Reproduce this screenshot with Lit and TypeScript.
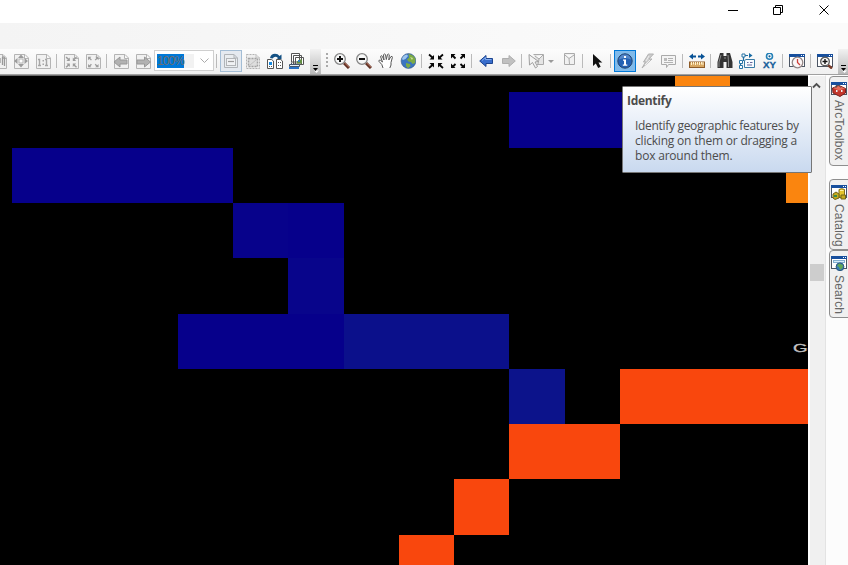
import { LitElement, html, svg, css, nothing } from "lit";
import { customElement, property } from "lit/decorators.js";

const G = "#b4b4b4";
const page = svg`<path d="M1.5 1.5H12L15.5 5V15.5H1.5Z M11.5 1.5V5.5H15.5" fill="#f1f1f1" stroke=${G}/>`;
const window_ = svg`<rect x="0.5" y="1.5" width="15" height="12" fill="#fff" stroke="#4c5664"/><path d="M0 1H16V4H0Z" fill="#174f9d"/><path d="M12 2h1v1h-1zM14 2h1v1h-1z" fill="#fff"/>`;
const lens = (sign: unknown) => svg`<path d="M10 10L15 15" stroke="#5f2f22" stroke-width="3"/><path d="M10.5 9.8L15 14.2" stroke="#b77561"/><circle cx="6" cy="6" r="5.3" fill="#f7f8f8" stroke="#858585" stroke-width="1.3"/>${sign}`;
const inward = (c: string) => svg`<path d="M1 1.500L5 5M15 1.500L11 5M1 15L5 11.500M15 15L11 11.500" stroke=${c} stroke-width="1.800"/><path d="M6 2V6.500H1.500ZM10 2V6.500H14.500ZM6 14.500V10H1.500ZM10 14.500V10H14.500Z" fill=${c}/>`;
const outward = (c: string) => svg`<path d="M2 2L5.500 5.500M14 2L10.500 5.500M2 14.500L5.500 11M14 14.500L10.500 11" stroke=${c} stroke-width="1.800"/><path d="M1 1H5.500L1 5.500ZM15 1H10.500L15 5.500ZM1 15H5.500L1 10.500ZM15 15H10.500L15 10.500Z" fill=${c}/>`;

const icons: Record<string, unknown> = {
  pan: svg`${page}<path d="M9 10V5M11.5 12V4.500Q13 3 13.500 5V13" fill="none" stroke="#999" stroke-width="1.3"/>`,
  fullPage: svg`${page}<path d="M8 1.5L5 5H11ZM8 14.500L5 11H11ZM1 8L4.500 5V11ZM15 8L11.500 5V11Z" fill="#9c9c9c"/><rect x="6" y="6" width="4" height="4" fill="#fff" stroke=${G}/>`,
  oneToOne: svg`${page}<path d="M3 6.500H4.500V12M3 12.500H6M10 6.500H11.500V12M10 12.500H13" fill="none" stroke="#a6a6a6" stroke-width="1.4"/><path d="M7.500 7h1.500v1.500H7.500zM7.500 10.500h1.500V12H7.500z" fill="#a6a6a6"/>`,
  pageIn: svg`${page}<g transform="translate(2.3 3) scale(.75)">${inward("#9c9c9c")}</g>`,
  pageOut: svg`${page}<g transform="translate(2.3 3) scale(.75)">${outward("#9c9c9c")}</g>`,
  pageBack: svg`${page}<path d="M1 9L7 4V7H14V11H7V14Z" fill="#b2b2b2" stroke="#989898"/>`,
  pageNext: svg`${page}<path d="M15.500 9L9.500 4V7H2V11H9.500V14Z" fill="#b2b2b2" stroke="#989898"/>`,
  draft: svg`<path d="M1.500 1.500H11L14.500 5V14.500H1.500ZM11 1.500V5H14.500" fill="#e9edf0" stroke="#b0b4b8"/><rect x="3.500" y="5.500" width="9" height="7" fill="#f0f2f4" stroke="#b2b5b8"/><path d="M5 8.500H11" stroke="#9b9b9b" stroke-width="1.200"/>`,
  focus: svg`<path d="M1.500 1.500H11L14.500 5V15.500H1.500Z" fill="#eee" stroke="#b2b2b2" stroke-dasharray="2 1"/><path d="M3.500 5.500H12.500V13.500H3.500Z" fill="#dedede" stroke="#a2a2a2" stroke-width="1.500" stroke-dasharray="2 1"/><path d="M5 12L11 7M11 1.500V5H15" stroke="#c0c0c0" fill="none"/>`,
  change: svg`<path d="M3 5Q4 .8 8 .8Q11 .8 12.500 3L14.500 1.500V6.500H9.500L11 5Q8 2.500 5.500 5.500Z" fill="#145184"/><path d="M.5 6.500H4.500L6.500 8V15.500H.5ZM9.500 6.500H13.500L15.500 8V15.500H9.500Z" fill="#fff" stroke="#555"/><path d="M2 9H5V12H2Z" fill="#168ae0"/><path d="M11 9.500h3M11 12.500h3M2 13.500h3" stroke="#555" stroke-dasharray="1 1"/>`,
  pages: svg`<path d="M2.500 9V.5H10.500V9ZM4.500 11V2.500H12.500V11ZM6.500 11.500V4.500H14.500V11.500Z" fill="#fff" stroke="#555"/><path d="M8 10.500V8H10V6.500H13V10.500Z" fill="#639043"/><path d="M9 7h2v2H9z" fill="#3280bf"/><path d="M0.500 11.500H10.500V13.500H.5ZM2.500 9.500V11" fill="#e7f0f8" stroke="#45566b"/><path d="M0 15H10" stroke="#2b74c8" stroke-width="2"/>`,
  zoomIn: lens(svg`<path d="M3 6H9M6 3V9" stroke="#111" stroke-width="2"/>`),
  zoomOut: lens(svg`<path d="M3 6H9" stroke="#111" stroke-width="2"/>`),
  hand: svg`<path d="M5 15L3.800 11.500L.8 8.200Q.8 6.500 2.500 7.300L4.500 9L2.500 3.500Q3 2 4.200 3.200L6 7L5.500 1.700Q6.500 .3 7.500 1.600L8.300 6.500L9.500 1.500Q10.500 .5 11.300 1.800L10.800 7L13 3.500Q14.500 3 14.400 4.400L13 9.500V12L11.800 15" fill="#fff" stroke="#555"/>`,
  globe: svg`<circle cx="8.500" cy="8" r="7.400" fill="#3a74c0" stroke="#36567d" stroke-width=".6"/><path d="M2 6Q3 2 7 1.500L8 3L5.500 6L3 7Z" fill="#9cc5ee"/><path d="M8.500 1Q13.500 1.500 15.500 6L15 10L12.500 11L11 9L8.500 8.500L7 6.500L9 4.500ZM6 10L10 11L10.500 13L8 15.200L6 13Z" fill="#7cab44"/><path d="M10 4L13 5L12 7Z" fill="#cde09a"/>`,
  in: inward("#080808"),
  out: outward("#080808"),
  back: svg`<path d="M1.700 8L8 2.500V5.500H14.500V10.500H8V13.500Z" fill="#386dcc" stroke="#1b438f"/><path d="M4 7.500L7.500 4.500V6.500H13.500" stroke="#83aced" fill="none"/>`,
  next: svg`<path d="M15.300 8L9 2.500V5.500H2.500V10.500H9V13.500Z" fill="#c0c0c0" stroke="#aeaeae"/>`,
  select: svg`<path d="M5.500 1.500H15.500V11.500H9M7 3L11 6L15 2M11 6L10 11" fill="#e5e5e5" stroke="#aaa"/><path d="M1 1.500L1.500 12L4.500 9.500L7.500 15L9.500 13.500L7 9L10.500 8.500Z" fill="#f3f3f3" stroke="#9e9e9e"/>`,
  clear: svg`<path d="M3.500 .5H13.500V11.500H3.500ZM4 2L8 5.500L13 2M8 5.500L8.500 11" fill="#f1f1f1" stroke="#aaa"/>`,
  cursor: svg`<path d="M4 1V13L6.800 10.500L9.200 15L11.700 13.800L9.500 9.500H13.300Z" fill="#111"/>`,
  identify: svg`<circle cx="8" cy="8" r="7.200" fill="#2462b4" stroke="#24456e"/><path d="M2 6.500Q3 1.500 8 1.500T14 6.500Q8 3.500 2 6.500" fill="#5487c8"/><path d="M7 3H9V5H7ZM6 6.500H9V11.500H10.300V12.700H5.800V11.500H7V7.700H6Z" fill="#fff"/>`,
  flash: svg`<path d="M9.500 1H14.500L10 6H13L3 15L6.500 9H4.500Z" fill="#ccc" stroke="#b2b2b2"/><path d="M10 3L7 8M11 7L6 12" stroke="#eee"/>`,
  popup: svg`<path d="M.5 2.500H14.500V11.500H7.500L5.500 14.500V11.500H.5Z" fill="#f4f4f4" stroke="#aaa"/><path d="M3 5H6V8H3Z" fill="#bbb"/><path d="M7 5.500H12M7 7.500H12M3 9.500H12" stroke="#b2b2b2"/>`,
  measure: svg`<path d="M0 3.500L4 .5V2.500H7V4.500H4V6.500ZM16 3.500L12 .5V2.500H9V4.500H12V6.500Z" fill="#075195"/><rect x=".5" y="9" width="15" height="5.500" fill="#d7a761" stroke="#8e5b27"/><path d="M2.500 9V12M4.500 9V11.500M6.500 9V12M8.500 9V11.500M10.500 9V12M12.500 9V11.500M14 9V12" stroke="#fff0ca"/>`,
  find: svg`<path d="M3 0H6.500V3H9.500V0H13L15.500 9V15H9.500V9H6.500V15H.5V9Z" fill="#343434"/><path d="M4 2L2 9V14M11 2L11.500 9V14M7 5H9" fill="none" stroke="#8b8b8b"/>`,
  route: svg`<path d="M1.500 13V8.500H4M4.500 8V2.500H9" fill="none" stroke="#256d9f" stroke-width="1.200"/><path d="M10 0L13.500 2.500L10 5Z" fill="#176aa3"/><path d="M.5 7.500h3v3h-3zM3 1h3v3H3zM.5 12.500h3v3h-3z" fill="#fff" stroke="#2875a6"/><path d="M5.500 7.500L7 6.500H15.500V14.500H5.500Z" fill="#f6fbff" stroke="#397ba5"/><path d="M8 9.500H9.500M11 9.500H13.500M8 12H13" stroke="#669"/>`,
  xy: svg`<circle cx="8.500" cy="3.300" r="3" fill="#fff" stroke="#2580b7" stroke-width="1.600"/><circle cx="8.500" cy="3.300" r="1.100" fill="#145a8e"/><text x="2" y="15.300" font-family="Liberation Sans" font-weight="bold" font-size="9" textLength="13" lengthAdjust="spacingAndGlyphs" fill="#145d9a" stroke="#145d9a" stroke-width=".3">XY</text>`,
  time: svg`${window_}<circle cx="8.500" cy="9.500" r="5.300" fill="#fbf7f7" stroke="#938686" stroke-width="1.300"/><path d="M8.500 6V9.500L11 12" fill="none" stroke="#ce3e38" stroke-width="1.300"/>`,
  viewer: svg`${window_}<path d="M11 12L15 15.500" stroke="#793c2a" stroke-width="2.500"/><circle cx="8" cy="8.500" r="4.300" fill="#fff" stroke="#5d5d5d" stroke-width="1.400"/><path d="M5.500 8.500H10.500M8 6V11" stroke="#111" stroke-width="1.400"/>`,
  toolbox: svg`${window_}<path d="M1.500 7L8 4.500L14.500 7.500V12L9 15.500L2 12Z" fill="#c3362b" stroke="#77221e"/><path d="M2 7L8 9.500L14 7.500L8 5Z" fill="#e86d5a"/><path d="M5 7V4.500Q8 3.500 10 6.500" fill="none" stroke="#555"/><path d="M5 9h1.500v2H5zM10 9h1.500v2H10z" fill="#eee"/>`,
  catalog: svg`${window_}<path d="M8 5.500Q10.500 3.800 13.500 5.500V13Q11 14.500 8 13Z" fill="#e5c52b" stroke="#85721a"/><path d="M2 10L5 8L8 10V14L4 15.500L2 14ZM10 11H14.500V15H10Z" fill="#c6ab1d" stroke="#736419"/><path d="M9 6.500H12.500" stroke="#fff2a0"/><path d="M3 11h3v2H3z" fill="#3c8a46"/>`,
  search: svg`${window_}<rect x="2.500" y="5.500" width="11" height="2" fill="#d8ecfa" stroke="#83afcf"/><circle cx="9" cy="11.800" r="3.900" fill="#367bb8" stroke="#28557e"/><path d="M8 8.500L12 10L11.500 13L9 15L8 12L6 11Z" fill="#62a653"/>`,
};

@customElement("tool-icon")
class ToolIcon extends LitElement {
  @property() name = "";
  static styles = css`
    :host { display: block; width: 16px; height: 16px; flex: none; }
    svg { display: block; }
  `;
  render() {
    return html`<svg width="16" height="16" viewBox="0 0 16 16" fill="none">${icons[this.name] ?? nothing}</svg>`;
  }
}

const leftTools = ["pan", "fullPage", "oneToOne", "|", "pageIn", "pageOut", "|", "pageBack", "pageNext"];
const layoutTools = ["|", "draft*", "focus", "change", "pages"];
const mainTools = ["zoomIn", "zoomOut", "hand", "globe", "|", "in", "out", "|", "back", "next", "|", "select", "v", "clear", "|",
  "cursor", "|", "identify!", "flash", "popup", "|", "measure", "|", "find", "route", "xy", "|", "time", "|", "viewer"];

const cells: [number, number, number, number, string][] = [
  [509, 92, 111, 56, "#06008b"], [620, 92, 56, 56, "#06008b"], [12, 148, 221, 55, "#06008b"],
  [233, 203, 55, 55, "#07028b"], [288, 203, 56, 55, "#06008b"], [288, 258, 56, 56, "#08058b"],
  [178, 314, 166, 55, "#06008b"], [344, 314, 165, 55, "#0b108b"], [509, 369, 56, 55, "#0c138b"],
  [675, 76, 55, 16, "#fa850f"], [786, 148, 22, 55, "#fa850f"],
  [620, 369, 188, 55, "#f9470d"], [509, 424, 111, 55, "#f9470d"], [454, 479, 55, 56, "#f9470d"], [399, 535, 55, 30, "#f9470d"],
];

@customElement("app-root")
class AppRoot extends LitElement {
  static styles = css`
    :host { display: flex; flex-direction: column; position: relative; width: 848px; height: 565px; overflow: hidden; background: #fcfcfc; font-family: "Liberation Sans", sans-serif; }
    * { box-sizing: border-box; }
    .title { height: 23px; flex: none; background: #fff; display: flex; justify-content: flex-end; }
    .title svg { display: block; }
    .menu { height: 26px; flex: none; background: linear-gradient(90deg, #f4f4f4, #fbfbfb 85%); }
    .toolbar { height: 26px; flex: none; display: flex; align-items: flex-start; padding-top: 1px; background: linear-gradient(#fcfcfc, #f0f0f0); border-bottom: 1px solid #a0a0a0; overflow: hidden; }
    .group { display: flex; flex: none; }
    .first { margin-left: -12px; }
    .tool { width: 22px; height: 22px; padding: 3px; flex: none; }
    .checked { background: #e5eaf0; outline: 1px solid #a3bdd5; outline-offset: -1px; }
    .hot { background: #80baea; outline: 1px solid #0078d7; outline-offset: -1px; }
    .sep { width: 6px; height: 22px; padding: 4px 0 4px 2px; }
    .sep::before { content: ""; display: block; width: 1px; height: 14px; background: #bababa; }
    .drop { width: 11px; padding: 10px 0 0 1px; }
    .drop::before { content: ""; display: block; border: 3px solid transparent; border-top: 3px solid #999; width: 0; }
    .combo { width: 60px; height: 21px; flex: none; border: 1px solid #cfcfcf; background: #fff; display: flex; align-items: center; padding-left: 2px; }
    .value { width: 37px; height: 14px; background: #f2f2f2; display: flex; }
    .picked { width: 27px; height: 14px; background: #0078d7; color: #6d6d6d; font: 12px/14px "Liberation Sans", sans-serif; letter-spacing: -.9px; }
    .chev { margin-left: 6px; }
    .more { width: 11px; height: 25px; margin: -1px 0 0 2px; flex: none; background: linear-gradient(#f2f2f2, #b9b9b9); }
    .more svg { display: block; margin: 15px 0 0 2px; }
    .grip { width: 10px; height: 22px; padding: 3px 0 0 5px; flex: none; }
    .grip::before { content: ""; display: block; width: 2px; height: 15px; background: repeating-linear-gradient(#aaa 0 2px, transparent 2px 4px); }
    .body { flex: 1; display: flex; min-height: 0; }
    .map { width: 808px; flex: none; background: #000; border-top: 1px solid #696969; }
    .map svg { display: block; }
    .scroll { width: 18px; flex: none; background: #f0f0f0; border: solid #fff; border-width: 1px 0 0 2px; border-right: 1px solid #e3e3e3; display: flex; flex-direction: column; }
    .up { height: 188px; padding: 6px 0 0 2px; flex: none; }
    .up svg { display: block; }
    .thumb { width: 14px; height: 17px; background: #cdcdcd; }
    .dock { flex: 1; display: flex; flex-direction: column; padding: 1px 0 0 3px; background: #fcfcfc; }
    .tab { width: 22px; flex: none; border: 1px solid #8e8e8e; border-radius: 4px 0 0 4px; background: #f0f0f0; display: flex; flex-direction: column; padding: 4px 0 0 1px; }
    .arc { height: 90px; margin-bottom: 13px; }
    .cat { height: 71px; }
    .sea { height: 68px; }
    .label { writing-mode: vertical-rl; font-size: 12px; line-height: 14px; color: #666; margin: 4px 0 0 1px; width: 14px; white-space: nowrap; letter-spacing: .2px; }
    .arc .label { margin-top: 3px; letter-spacing: .1px; }
    .tip { position: absolute; left: 622px; top: 86px; width: 190px; height: 87px; border: 1px solid #767676; border-radius: 1px; background: linear-gradient(#fff, #c9d9ef); color: #4c4c4c; font: 12px/15px "Open Sans", sans-serif; padding: 6px 4px; }
    .head { font-weight: 700; line-height: 16px; letter-spacing: -.3px; }
    .desc { padding: 9px 0 0 8px; white-space: nowrap; }
    .line { height: 15px; letter-spacing: -.2px; }
    .line:first-child { letter-spacing: -.31px; }
  `;

  tool(id: string) {
    if (id === "|") return html`<span class="sep"></span>`;
    if (id === "v") return html`<span class="drop"></span>`;
    const state = id.endsWith("*") ? "checked" : id.endsWith("!") ? "hot" : "";
    return html`<span class="tool ${state}"><tool-icon name=${id.replace(/[*!]/, "")}></tool-icon></span>`;
  }

  more() {
    return html`<span class="more"><svg width="8" height="9"><path d="M1 1.500H6" stroke="#000"/><path d="M2 6.500H7L4.500 9Z" fill="#fff"/><path d="M1 4H6L3.500 7Z" fill="#000"/></svg></span>`;
  }

  tab(kind: string, icon: string, label: string) {
    return html`<div class="tab ${kind}"><tool-icon name=${icon}></tool-icon><span class="label">${label}</span></div>`;
  }

  render() {
    return html`
      <div class="title">
        <svg width="138" height="23" fill="none" stroke="#000">
          <path d="M18 10.500H28M63.500 7.500H70.500V14.500H63.500ZM65.500 7V5.500H72.500V12.500H71M109.500 5.500L118.500 14.500M118.500 5.500L109.500 14.500"/>
        </svg>
      </div>
      <div class="menu"></div>
      <div class="toolbar">
        <div class="group first">${leftTools.map((t) => this.tool(t))}</div>
        <div class="combo">
          <span class="value"><span class="picked">100%</span></span>
          <svg class="chev" width="9" height="6" fill="none" stroke="#aaa"><path d="M.5 .5L4.500 4.500L8.500 .5"/></svg>
        </div>
        <div class="group">${layoutTools.map((t) => this.tool(t))}</div>
        ${this.more()}
        <span class="grip"></span>
        <div class="group">${mainTools.map((t) => this.tool(t))}</div>
        ${this.more()}
      </div>
      <div class="body">
        <div class="map">
          <svg width="808" height="489" viewBox="0 76 808 489" shape-rendering="crispEdges">
            ${cells.map(([x, y, w, h, c]) => svg`<rect x=${x} y=${y} width=${w} height=${h} fill=${c}></rect>`)}
            <text x="793" y="352" font-family="Liberation Sans" font-size="11.5" textLength="25" lengthAdjust="spacingAndGlyphs" fill="#c4c4c4" stroke="#c4c4c4" stroke-width=".3">Go</text>
          </svg>
        </div>
        <div class="scroll">
          <div class="up"><svg width="9" height="7" fill="none" stroke="#505050" stroke-width="1.800"><path d="M1 5.500L4.500 2L8 5.500"/></svg></div>
          <div class="thumb"></div>
        </div>
        <div class="dock">
          ${this.tab("arc", "toolbox", "ArcToolbox")}
          ${this.tab("cat", "catalog", "Catalog")}
          ${this.tab("sea", "search", "Search")}
        </div>
      </div>
      <div class="tip">
        <div class="head">Identify</div>
        <div class="desc">
          <div class="line">Identify geographic features by</div>
          <div class="line">clicking on them or dragging a</div>
          <div class="line">box around them.</div>
        </div>
      </div>
    `;
  }
}
